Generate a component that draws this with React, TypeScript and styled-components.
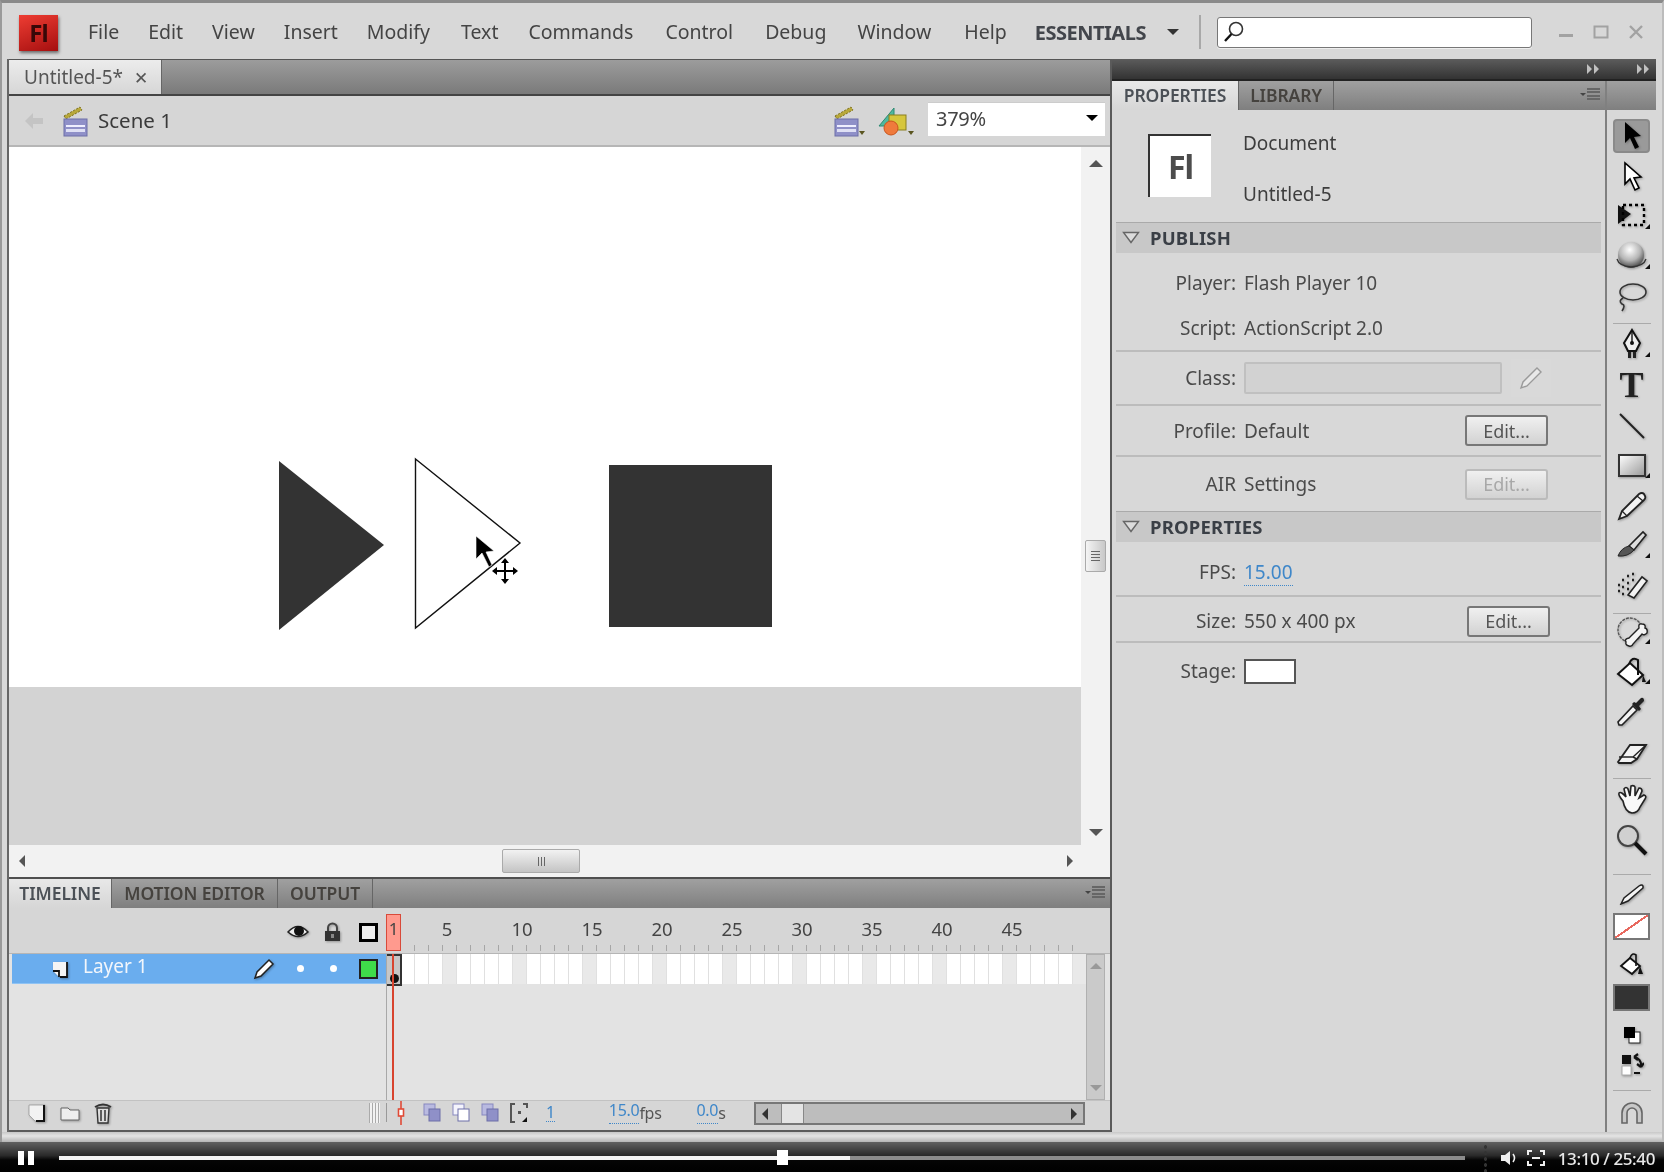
import React from "react";
import styled, { createGlobalStyle } from "styled-components";

const Global = createGlobalStyle`
  html, body { margin: 0; padding: 0; width: 1664px; height: 1172px; overflow: hidden; background: #d8d8d8; }
  #root { width: 1664px; height: 1172px; }
  * { box-sizing: border-box; }
`;

const Page = styled.div`
  width: 1664px; height: 1172px; display: flex; flex-direction: column; overflow: hidden;
  font-family: "Noto Sans", "Liberation Sans", sans-serif; font-size: 19px; color: #3d3d3d;
  background: #d8d8d8; filter: blur(0.55px);
`;
const Window = styled.div`
  height: 1142px; display: flex; flex-direction: column;
  border-top: 3px solid #8a8a8a; border-left: 2px solid #9a9a9a; border-right: 2px solid #bcbcbc;
  background: #d8d8d8;
`;
const MenuBar = styled.header`
  height: 56px; display: flex; align-items: center; padding: 2px 0 0 17px; flex: none;
`;
const Logo = styled.div`
  width: 39px; height: 36px; margin-right: 30px; margin-top: 1px; display: flex; align-items: center; justify-content: center;
  background: linear-gradient(160deg, #ee3d33, #a50f0f); box-shadow: 1px 2px 3px rgba(0,0,0,.5);
  font-weight: 700; font-size: 24px; color: #380808; letter-spacing: -1px;
`;
const Menu = styled.nav` display: flex; gap: 29px; `;
const MenuItem = styled.span<{ $extra: number }>` line-height: 24px; color: #444; font-size: 19.5px; margin-left: ${p => p.$extra}px; `;
const Workspaces = styled.div`
  display: flex; align-items: center; margin-left: 28px; font-weight: 700; font-size: 20px; color: #43464c; width: 164px; letter-spacing: -.5px;
`;
const Divider = styled.span` width: 2px; height: 34px; background: #a8a8a8; margin: 0 16px 0 0; `;
const Search = styled.div`
  width: 315px; height: 31px; background: #fff; border: 1px solid #777; border-radius: 3px;
  box-shadow: 0 1px 0 #eee; display: flex; align-items: center; padding-left: 4px;
`;
const WinControls = styled.div` display: flex; align-items: center; margin-left: 26px; gap: 19px; `;

const Workspace = styled.div`
  height: 1073px; flex: none; display: flex; margin: 0 5px 0 5px; 
`;
const Main = styled.main`
  width: 1103px; display: flex; flex-direction: column; border-left: 2px solid #666; 
`;
const DocTabs = styled.div`
  height: 37px; flex: none; display: flex; background: linear-gradient(#9c9c9c, #7a7a7a); border-bottom: 2px solid #444; border-top: 1px solid #555;
`;
const DocTab = styled.div`
  width: 153px; background: linear-gradient(#ececec, #d6d6d6); display: flex; align-items: center; gap: 11px; padding-left: 15px; color: #555; border-right: 1px solid #666;
`;
const CloseX = styled.span` font-size: 17px; `;
const SceneBar = styled.div`
  height: 51px; flex: none; display: flex; align-items: center; background: #d6d6d6; border-bottom: 2px solid #b6b6b6; padding-left: 14px;
`;
const BackGap = styled.span` width: 14px; `;
const SceneName = styled.span` margin-left: 3px; margin-top: -2px; color: #3a3a3a; font-size: 20.5px; `;
const SceneTools = styled.div` margin-left: auto; display: flex; align-items: center; gap: 11px; margin-right: 5px; `;
const ZoomSelect = styled.div`
  width: 177px; height: 34px; background: #fff; display: flex; align-items: center; justify-content: space-between; padding: 0 7px 3px 8px; margin-left: 2px; margin-top: -3px; border-top: 1px solid #ccc; color: #444; font-size: 20px; letter-spacing: -.3px;
`;
const StageArea = styled.div` height: 730px; flex: none; display: flex; flex-direction: column; `;
const StageRow = styled.div` height: 698px; flex: none; display: flex; `;
const Canvas = styled.div` flex: 1; display: flex; flex-direction: column; background: #d3d3d3; `;
const StageSheet = styled.div` height: 540px; flex: none; background: #fff; `;
const Art = styled.svg` display: block; width: 100%; height: 100%; `;
const VBar = styled.div`
  width: 29px; flex: none; background: #f2f2f2; display: flex; flex-direction: column; align-items: center; padding: 13px 0 9px 0;
`;
const VThumb = styled.div`
  width: 21px; height: 32px; margin-top: 373px; margin-bottom: auto; background: linear-gradient(90deg, #f4f4f4, #c8c8c8); border: 1px solid #aaa; border-radius: 2px; display: flex; flex-direction: column; align-items: center; justify-content: center; gap: 2px;
  & > i { width: 9px; height: 1px; background: #666; display: block; }
`;
const HBar = styled.div`
  height: 32px; flex: none; background: #f2f2f2; display: flex; align-items: center; padding: 0 37px 0 10px;
`;
const HThumb = styled.div`
  width: 78px; height: 24px; margin-left: 477px; margin-right: auto; background: linear-gradient(#f2f2f2, #c4c4c4); border: 1px solid #aaa; border-radius: 2px; display: flex; align-items: center; justify-content: center; gap: 2px;
  & > i { width: 1px; height: 9px; background: #666; display: block; }
`;
const Tri = styled.i<{ $d: "u" | "d" | "l" | "r"; $s?: number; $c?: string; $ml?: number }>`
  display: inline-block; width: 0; height: 0; flex: none; margin-left: ${p => p.$ml ?? 0}px;
  ${p => { const s = p.$s ?? 5; const c = p.$c ?? "#555";
    return p.$d === "u" ? `border-left:${s}px solid transparent;border-right:${s}px solid transparent;border-bottom:${s}px solid ${c};`
      : p.$d === "d" ? `border-left:${s}px solid transparent;border-right:${s}px solid transparent;border-top:${s}px solid ${c};`
      : p.$d === "l" ? `border-top:${s}px solid transparent;border-bottom:${s}px solid transparent;border-right:${s}px solid ${c};`
      : `border-top:${s}px solid transparent;border-bottom:${s}px solid transparent;border-left:${s}px solid ${c};`; }}
`;

const Timeline = styled.section`
  height: 255px; flex: none; display: flex; flex-direction: column; background: #d6d6d6; border-top: 2px solid #4f4f4f; border-bottom: 2px solid #5c5c5c;
`;
const TabStrip = styled.div`
  height: 29px; flex: none; display: flex; align-items: stretch; background: linear-gradient(#a0a0a0, #7f7f7f); position: relative;
`;
const PanelTab = styled.div<{ $w: number; $active?: boolean }>`
  width: ${p => p.$w}px; display: flex; align-items: center; justify-content: center; font-size: 17.5px; font-weight: 600; letter-spacing: -.1px; padding-bottom: 2px;
  border-right: 1px solid #666;
  color: ${p => (p.$active ? "#4b5056" : "#45423e")};
  background: ${p => (p.$active ? "linear-gradient(#e8e8e8, #d6d6d6)" : "transparent")};
`;
const PanelMenu = styled.span`
  position: absolute; right: 5px; top: 7px; display: flex; align-items: center; gap: 1px;
`;
const MenuLines = styled.span`
  display: block; width: 13px; height: 12px;
  background: repeating-linear-gradient(#666 0 2px, transparent 2px 3.3px);
`;
const TimeHead = styled.div` height: 45px; flex: none; display: flex; `;
const LayerHead = styled.div`
  width: 377px; flex: none; display: flex; align-items: center; justify-content: flex-end; gap: 15px; padding: 3px 8px 0 0;
`;
const OutlineBox = styled.span` width: 19px; height: 19px; border: 3px solid #000; background: #eee; display: block; margin-left: 3px; `;
const Ruler = styled.div`
  position: relative; flex: 1; display: flex; padding: 10px 0 0 26px; font-size: 18.5px; color: #444;
  &::after {
    content: ""; position: absolute; left: 14px; right: 30px; bottom: 2px; height: 6px;
    background: repeating-linear-gradient(90deg, #a6a6a6 0 1px, transparent 1px 14px);
  }
`;
const FrameNum = styled.span`
  width: 70px; text-align: center; line-height: 22px;
  &:first-of-type { margin-right: 5px; }
`;
const Playhead = styled.div`
  position: absolute; left: 0; top: 6px; width: 15px; height: 37px; background: #ff9a8e; border: 1px solid #d84a3a; display: flex; justify-content: center; font-size: 17px; line-height: 28px; color: #444; z-index: 2;
`;
const TimeRows = styled.div` height: 147px; flex: none; display: flex; position: relative; background: #e3e3e3; border-top: 1px solid #b5b5b5; `;
const LayerCol = styled.div` width: 377px; flex: none; padding-left: 3px; `;
const LayerRow = styled.div`
  height: 30px; background: #6aadee; display: flex; align-items: center; color: #f2f6fb; padding-left: 40px; border-bottom: 1px solid #8fc3f4;
`;
const LayerName = styled.span` margin-left: 13px; margin-top: -5px; font-size: 19px; `;
const LayerTools = styled.div` margin-left: auto; display: flex; align-items: center; gap: 0; padding-right: 8px; `;
const LayerDot = styled.i<{ $w?: number }>`
  width: 7px; height: 7px; background: #fff; border-radius: 50%; display: block; margin-left: ${p => p.$w ?? 0}px;
`;
const Swatch = styled.span` width: 19px; height: 20px; display: block; background: #3fdc4a; border: 2px solid #222; margin-left: 22px; `;
const FrameCol = styled.div` flex: 1; overflow: hidden; border-left: 1px solid #a8a8a8; position: relative; `;
const FrameRow = styled.div` height: 30px; display: flex; margin-left: 14px; `;
const Cell = styled.i<{ $alt?: boolean }>`
  width: 14px; flex: none; display: block; background: ${p => (p.$alt ? "#e9e9e9" : "#fff")}; border-right: 1px solid #e0e0e0;
`;
const KeyFrame = styled.div`
  position: absolute; left: 0; top: 0; width: 15px; height: 32px; border: 2px solid #333; border-left: 0; background: #c6c6c6;
  &::after { content: ""; position: absolute; left: 3px; top: 18px; width: 9px; height: 9px; border-radius: 50%; background: #111; }
`;
const Needle = styled.div` position: absolute; left: 383px; top: 0; bottom: 0; width: 2px; background: #d8442f; z-index: 2; `;
const VBarSmall = styled.div`
  width: 19px; margin-right: 5px; flex: none; background: #cacaca; border: 1px solid #b0b0b0; display: flex; flex-direction: column; align-items: center; justify-content: space-between; padding: 8px 0;
`;
const TimeFoot = styled.div` flex: 1; display: flex; align-items: center; background: #d6d6d6; border-top: 1px solid #c2c2c2; padding-bottom: 5px; `;
const LayerFoot = styled.div` width: 377px; flex: none; display: flex; align-items: center; padding: 0 6px 0 19px; gap: 14px; `;
const Grip = styled.span`
  margin-left: auto; width: 11px; height: 20px; background: repeating-linear-gradient(90deg, #aaa 0 1px, #f2f2f2 1px 3px);
`;
const FrameFoot = styled.div`
  flex: 1; display: flex; align-items: center; height: 100%; padding-left: 8px; gap: 11px; position: relative;
  &::before { content: ""; position: absolute; left: 0; top: 2px; bottom: 3px; width: 1px; background: #999; }
`;
const Marker = styled.span` margin-right: 4px; display: flex; `;
const FootValue = styled.span<{ $ml: number }>`
  margin-left: ${p => p.$ml}px; font-size: 16px; color: #555; display: flex; letter-spacing: -.3px;
`;
const Link = styled.span`
  color: #3f87c9; border-bottom: 1px dotted #3f87c9; line-height: 17px; 
`;
const FootScroll = styled.div`
  position: absolute; left: 368px; top: 1px; width: 331px; height: 23px; background: #bdbdbd; border: 2px solid #777; display: flex; align-items: center; justify-content: space-between; padding: 0 6px;
`;
const FootThumb = styled.span` position: absolute; left: 25px; top: 0; bottom: 0; width: 23px; background: #e4e4e4; border-left: 1px solid #888; border-right: 1px solid #888; `;

const Side = styled.aside` width: 546px; flex: none; display: flex; flex-direction: column; border-left: 2px solid #5a5a5a; `;
const DockHeader = styled.div`
  height: 22px; flex: none; background: linear-gradient(#5c5c5c, #333); border-bottom: 2px solid #222; display: flex; align-items: center; justify-content: flex-end; gap: 36px; padding-right: 6px; color: #bbb;
`;
const SideBody = styled.div` flex: 1; display: flex; `;
const PropsCol = styled.div` flex: 1; display: flex; flex-direction: column; `;
const DocInfo = styled.div` height: 112px; flex: none; display: flex; padding: 24px 0 0 36px; `;
const Thumb = styled.div`
  width: 63px; height: 63px; background: #fff; border-top: 2px solid #333; border-left: 2px solid #333; display: flex; align-items: center; justify-content: center; font-weight: 700; font-size: 32px; color: #4c4c4c; letter-spacing: -1px;
`;
const DocText = styled.div` margin-left: 32px; display: flex; flex-direction: column; justify-content: space-between; height: 75px; margin-top: -3px; line-height: 24px; `;
const SectionHead = styled.div`
  height: 31px; flex: none; margin: 0 4px 0 4px; background: #c8c8c8; border-top: 1px solid #aaa; display: flex; align-items: center; gap: 10px; padding: 0 0 2px 6px; font-weight: 700; font-size: 18.5px; letter-spacing: .2px; color: #3a3f46;
`;
const Row = styled.div<{ $h: number; $line?: boolean; $pt?: number }>`
  height: ${p => p.$h}px; flex: none; margin: 0 4px; display: flex; align-items: center; padding-top: ${p => p.$pt ?? 0}px;
  ${p => (p.$line ? "border-bottom: 2px solid #bcbcbc;" : "")}
`;
const Label = styled.span` width: 120px; flex: none; text-align: right; color: #4a4a4a; `;
const Value = styled.span` margin-left: 8px; color: #4a4a4a; `;
const ClassField = styled.span` margin-left: 8px; width: 258px; height: 32px; background: #d2d2d2; border: 2px solid #c0c0c0; border-radius: 2px; `;
const PencilBox = styled.span` margin-left: 9px; width: 40px; height: 38px; display: flex; align-items: center; justify-content: center; background: #d9d9d9; `;
const EditButton = styled.button<{ $off?: boolean; $right?: number }>`
  margin-left: auto; margin-right: ${p => p.$right ?? 53}px; width: 83px; height: 31px; font: inherit; font-size: 18px; padding: 0;
  color: ${p => (p.$off ? "#a8a8a8" : "#555")};
  background: linear-gradient(#f0f0f0, #d2d2d2);
  border: 2px solid ${p => (p.$off ? "#bbb" : "#777")}; border-radius: 3px;
`;
const StageSwatch = styled.span` margin-left: 8px; width: 52px; height: 25px; background: #fff; border: 2px solid #555; `;

const ToolsCol = styled.div` width: 51px; flex: none; display: flex; flex-direction: column; border-left: 2px solid #808080; background: #d8d8d8; `;
const ToolsHead = styled.div` height: 29px; flex: none; background: linear-gradient(#a0a0a0, #7f7f7f); margin-bottom: 10px; `;
const Tool = styled.div<{ $on?: boolean; $corner?: boolean; $h?: number; $mt?: number; $mb?: number }>`
  position: relative; height: ${p => p.$h ?? 38}px; flex: none; margin: ${p => p.$mt ?? 0}px 6px ${p => p.$mb ?? 2}px 6px; display: flex; align-items: center; justify-content: center;
  ${p => (p.$on ? "background: #9a9a9a; border: 2px solid #8a8a8a; border-radius: 4px; margin-top: -1px; height: 34px; margin-bottom: 5px;" : "")}
  ${p => (p.$corner ? `&::after { content: ""; position: absolute; right: 0; bottom: 7px; border-left: 5px solid transparent; border-bottom: 5px solid #111; }` : "")}
`;
const ToolSep = styled.hr<{ $t?: number; $b?: number }>`
  width: 38px; height: 1px; border: 0; background: #aaa; flex: none; margin: ${p => p.$t ?? 5}px auto ${p => p.$b ?? 4}px 6px;
`;
const TypeT = styled.span` font-family: "Liberation Serif", serif; font-weight: 700; font-size: 36px; line-height: 32px; color: #222; text-shadow: 1px 1px 2px rgba(0,0,0,.35); `;
const ColorChip = styled.div<{ $bg: string }>`
  height: 27px; flex: none; margin: 0 6px; border: 2px solid #777; background: ${p => p.$bg};
`;

const BottomEdge = styled.div` flex: 1; background: linear-gradient(#c8c8c8, #e4e4e4 40%, #b4b4b4); `;
const VideoBar = styled.footer`
  height: 30px; flex: none; position: relative; display: flex; align-items: center; padding: 2px 9px 0 18px;
  background: linear-gradient(#606060, #2a2a2a 45%, #050505 60%, #000); color: #e8e8e8;
`;
const Pause = styled.span` width: 16px; height: 14px; display: block; margin-right: 25px;
  background: linear-gradient(90deg, #fff 0 6px, transparent 6px 10px, #fff 10px 16px); `;
const Track = styled.div` width: 1406px; height: 4px; flex: none; position: relative; background: linear-gradient(90deg, #f4f4f4 0 791px, #8c8c8c 791px); `;
const Knob = styled.span` position: absolute; left: 718px; top: -6px; width: 11px; height: 15px; background: #fff; `;
const Time = styled.span` margin-left: auto; font-size: 17px; font-weight: 500; letter-spacing: -.4px; `;
const Dots = styled.span` width: 5px; height: 28px; margin: 0 13px 0 18px; background: radial-gradient(circle, #333 0 1.5px, transparent 2px) 0 0/5px 6px; `;
const VideoIcons = styled.span` display: flex; align-items: center; gap: 8px; `;

const ShadowSvg = styled.svg` display: block; filter: drop-shadow(1px 1px 1px rgba(0,0,0,.3)); flex: none; `;
const FlatSvg = styled.svg` display: block; flex: none; `;

const TI = ({ children }: { children: React.ReactNode }) => (
  <ShadowSvg width="34" height="34" viewBox="0 0 34 34">{children}</ShadowSvg>
);

const Collapse = () => (
  <FlatSvg width="18" height="13" viewBox="0 0 18 13"><path d="M1.5 1.5 H16.5 L9 11.5 Z" fill="#dcdcdc" stroke="#666" strokeWidth="1.4" /></FlatSvg>
);

const Clapper = ({ small }: { small?: boolean }) => (
  <FlatSvg width="36" height="32" viewBox="0 0 36 32">
    <path d="M5 11 L21 2 L23 5 L7 14 Z" fill="#b8a83a" stroke="#7c7020" strokeWidth="1" strokeDasharray="2 1.5" />
    <rect x="5" y="14" width="23" height="17" fill="#8f90c8" stroke="#6d6ea8" />
    <rect x="7" y="20" width="19" height="2" fill="#eef" />
    <rect x="7" y="24" width="19" height="3" fill="#dfe0f4" />
    {small && <path d="M29 26 h6 l-3 4 Z" fill="#5a5520" />}
  </FlatSvg>
);

const frames = Array.from({ length: 50 }, (_, i) => i + 1);
const labels = [5, 10, 15, 20, 25, 30, 35, 40, 45];
const menu: [string, number][] = [
  ["File", 0], ["Edit", 0], ["View", 0], ["Insert", 0], ["Modify", 0], ["Text", 2],
  ["Commands", 1], ["Control", 3], ["Debug", 3], ["Window", 2], ["Help", 4],
];

const Onion = ({ variant }: { variant: number }) => (
  <FlatSvg width="18" height="20" viewBox="0 0 18 20">
    <rect x="1" y="1" width="11" height="11" fill={variant === 1 ? "#f4f4fc" : "#b9bae0"} stroke="#8788c0" />
    <rect x="6" y="6" width="11" height="12" fill={variant === 1 ? "#fff" : "#8f90c8"} stroke="#6d6ea8" />
  </FlatSvg>
);

export default function App() {
  return (
    <Page>
      <Global />
      <Window>
        <MenuBar>
          <Logo>Fl</Logo>
          <Menu>{menu.map(([m, x]) => <MenuItem key={m} $extra={x}>{m}</MenuItem>)}</Menu>
          <Workspaces>ESSENTIALS<Tri $d="d" $s={6} $c="#333" $ml={21} /></Workspaces>
          <Divider />
          <Search>
            <FlatSvg width="24" height="24" viewBox="0 0 24 24"><circle cx="14" cy="9" r="6.5" fill="none" stroke="#333" strokeWidth="1.6" /><path d="M9.5 14 L3 21" stroke="#111" strokeWidth="2.4" /></FlatSvg>
          </Search>
          <WinControls>
            <FlatSvg width="16" height="16" viewBox="0 0 16 16"><rect x="1" y="10" width="14" height="3" fill="#a2a2a2" /></FlatSvg>
            <FlatSvg width="16" height="16" viewBox="0 0 16 16"><rect x="1.5" y="2.5" width="13" height="11" fill="none" stroke="#a2a2a2" strokeWidth="2" /></FlatSvg>
            <FlatSvg width="16" height="16" viewBox="0 0 16 16"><path d="M2 2 L14 14 M14 2 L2 14" stroke="#a2a2a2" strokeWidth="2.4" /></FlatSvg>
          </WinControls>
        </MenuBar>
        <Workspace>
          <Main>
            <DocTabs><DocTab>Untitled-5*<CloseX>✕</CloseX></DocTab></DocTabs>
            <SceneBar>
              <FlatSvg width="22" height="22" viewBox="0 0 22 22"><path d="M2 11 L10 3 V8 H20 V14 H10 V19 Z" fill="#c4c4c4" /></FlatSvg>
              <BackGap />
              <Clapper />
              <SceneName>Scene 1</SceneName>
              <SceneTools>
                <Clapper small />
                <FlatSvg width="38" height="32" viewBox="0 0 38 32">
                  <path d="M2 21 L17 3 V21 Z" fill="#4fb89e" stroke="#2d8a72" />
                  <rect x="12" y="10" width="17" height="15" fill="#d6c63c" stroke="#8a7f1e" />
                  <circle cx="14" cy="23" r="7" fill="#ef7a3c" stroke="#c9551e" />
                  <path d="M31 26 h6 l-3 4 Z" fill="#5a5520" />
                </FlatSvg>
                <ZoomSelect>379%<Tri $d="d" $s={6} $c="#000" /></ZoomSelect>
              </SceneTools>
            </SceneBar>
            <StageArea>
              <StageRow>
                <Canvas>
                  <StageSheet>
                    <Art viewBox="9 147 1072 540">
                      <path d="M279 461 L384 545 L279 630 Z" fill="#333" />
                      <path d="M415.5 459 L520 543 L415.5 628 Z" fill="#fff" stroke="#111" strokeWidth="1.4" />
                      <rect x="609" y="465" width="163" height="162" fill="#333" />
                      <path d="M476 536 L476 559 L482 553 L489 567 L492 565 L486 552 L494 551 Z" fill="#000" stroke="#fff" strokeWidth=".6" />
                      <path d="M505 560 L505 582 M494 571 L516 571" stroke="#000" strokeWidth="2" />
                      <path d="M505 558 l-4 5 h8 Z M505 584 l-4 -5 h8 Z M492 571 l5 -4 v8 Z M518 571 l-5 -4 v8 Z" fill="#000" />
                    </Art>
                  </StageSheet>
                </Canvas>
                <VBar>
                  <Tri $d="u" $s={7} $c="#555" />
                  <VThumb><i /><i /><i /><i /></VThumb>
                  <Tri $d="d" $s={7} $c="#555" />
                </VBar>
              </StageRow>
              <HBar>
                <Tri $d="l" $s={6} $c="#555" />
                <HThumb><i /><i /><i /></HThumb>
                <Tri $d="r" $s={6} $c="#555" />
              </HBar>
            </StageArea>
            <Timeline>
              <TabStrip>
                <PanelTab $w={103} $active>TIMELINE</PanelTab>
                <PanelTab $w={166}>MOTION EDITOR</PanelTab>
                <PanelTab $w={95}>OUTPUT</PanelTab>
                <PanelMenu><Tri $d="d" $s={3} $c="#444" /><MenuLines /></PanelMenu>
              </TabStrip>
              <TimeHead>
                <LayerHead>
                  <ShadowSvg width="22" height="18" viewBox="0 0 22 18"><path d="M1 9 Q11 -2 21 9 Q11 18 1 9 Z" fill="#eee" stroke="#222" strokeWidth="1.5" /><circle cx="12" cy="8" r="5" fill="#111" /></ShadowSvg>
                  <ShadowSvg width="17" height="20" viewBox="0 0 17 20"><path d="M4 9 V6 a4.5 4.5 0 0 1 9 0 V9" fill="none" stroke="#444" strokeWidth="2" /><rect x="1" y="9" width="15" height="10" fill="#333" /><rect x="7" y="12" width="3" height="4" fill="#888" /></ShadowSvg>
                  <OutlineBox />
                </LayerHead>
                <Ruler>
                  <Playhead>1</Playhead>
                  {labels.map(l => <FrameNum key={l}>{l}</FrameNum>)}
                </Ruler>
              </TimeHead>
              <TimeRows>
                <LayerCol>
                  <LayerRow>
                    <ShadowSvg width="18" height="18" viewBox="0 0 18 18"><path d="M1 2 H15 V17 H7 L1 11 Z" fill="#f4f4f4" /><path d="M15 2 V17 H8 M1 11 H7 V17" stroke="#111" strokeWidth="1.8" fill="none" /></ShadowSvg>
                    <LayerName>Layer 1</LayerName>
                    <LayerTools>
                      <ShadowSvg width="24" height="24" viewBox="0 0 24 24"><path d="M3 21 L5 15 L17 3 L21 7 L9 19 Z" fill="#fff" stroke="#222" strokeWidth="1.5" /></ShadowSvg>
                      <LayerDot $w={21} />
                      <LayerDot $w={26} />
                      <Swatch />
                    </LayerTools>
                  </LayerRow>
                </LayerCol>
                <FrameCol>
                  <FrameRow>{frames.map(f => <Cell key={f} $alt={(f + 1) % 5 === 0} />)}</FrameRow>
                  <KeyFrame />
                </FrameCol>
                <VBarSmall><Tri $d="u" $s={6} $c="#999" /><Tri $d="d" $s={6} $c="#999" /></VBarSmall>
                <Needle />
              </TimeRows>
              <TimeFoot>
                <LayerFoot>
                  <ShadowSvg width="18" height="18" viewBox="0 0 18 18"><path d="M1 1 H17 V17 H7 L1 11 Z" fill="#f2f2f2" stroke="#999" strokeWidth=".8" /><path d="M16 1 V17 H8" stroke="#111" strokeWidth="2" fill="none" /></ShadowSvg>
                  <ShadowSvg width="20" height="16" viewBox="0 0 20 16"><path d="M1 3 H8 L10 5 H19 V15 H1 Z" fill="#eee" stroke="#666" /></ShadowSvg>
                  <ShadowSvg width="18" height="22" viewBox="0 0 18 22"><path d="M3 6 H15 L14 21 H4 Z" fill="#ddd" stroke="#333" strokeWidth="1.4" /><path d="M1 5 Q9 0 17 5" fill="none" stroke="#333" strokeWidth="2" /><path d="M7 8 V19 M11 8 V19" stroke="#333" strokeWidth="1.5" /></ShadowSvg>
                  <Grip />
                </LayerFoot>
                <FrameFoot>
                  <Marker>
                    <FlatSvg width="14" height="24" viewBox="0 0 14 24"><path d="M7 0 V24" stroke="#e04a36" strokeWidth="1.6" /><rect x="4.5" y="8" width="5" height="7" fill="#fff" stroke="#e04a36" strokeWidth="1.6" /></FlatSvg>
                  </Marker>
                  <Onion variant={0} />
                  <Onion variant={1} />
                  <Onion variant={2} />
                  <FlatSvg width="18" height="20" viewBox="0 0 18 20"><path d="M5 1 H1 V19 H5 M13 1 H17 V5 M9 9 h1 v1 h-1 Z" fill="none" stroke="#555" strokeWidth="2" /><path d="M17 14 V19 H12 Z" fill="#111" /></FlatSvg>
                  <FootValue $ml={7}><Link>1</Link></FootValue>
                  <FootValue $ml={43}><Link>15.0</Link>fps</FootValue>
                  <FootValue $ml={24}><Link>0.0</Link>s</FootValue>
                  <FootScroll>
                    <Tri $d="l" $s={6} $c="#333" />
                    <FootThumb />
                    <Tri $d="r" $s={6} $c="#333" />
                  </FootScroll>
                </FrameFoot>
              </TimeFoot>
            </Timeline>
          </Main>
          <Side>
            <DockHeader>
              <FlatSvg width="14" height="10" viewBox="0 0 14 10"><path d="M1 0 L6 5 L1 10 Z M8 0 L13 5 L8 10 Z" fill="#c0c0c0" /></FlatSvg>
              <FlatSvg width="14" height="10" viewBox="0 0 14 10"><path d="M1 0 L6 5 L1 10 Z M8 0 L13 5 L8 10 Z" fill="#c0c0c0" /></FlatSvg>
            </DockHeader>
            <SideBody>
              <PropsCol>
                <TabStrip>
                  <PanelTab $w={127} $active>PROPERTIES</PanelTab>
                  <PanelTab $w={95}>LIBRARY</PanelTab>
                  <PanelMenu><Tri $d="d" $s={3} $c="#444" /><MenuLines /></PanelMenu>
                </TabStrip>
                <DocInfo>
                  <Thumb>Fl</Thumb>
                  <DocText><span>Document</span><span>Untitled-5</span></DocText>
                </DocInfo>
                <SectionHead><Collapse />PUBLISH</SectionHead>
                <Row $h={53} $pt={6}><Label>Player:</Label><Value>Flash Player 10</Value></Row>
                <Row $h={46} $line><Label>Script:</Label><Value>ActionScript 2.0</Value></Row>
                <Row $h={54} $line><Label>Class:</Label><ClassField /><PencilBox>
                  <FlatSvg width="26" height="26" viewBox="0 0 26 26"><path d="M3 23 L5 17 L19 3 L23 7 L9 21 Z" fill="#e8e8e8" stroke="#9a9a9a" strokeWidth="1.4" /></FlatSvg>
                </PencilBox></Row>
                <Row $h={51} $line><Label>Profile:</Label><Value>Default</Value><EditButton>Edit...</EditButton></Row>
                <Row $h={54}><Label>AIR</Label><Value>Settings</Value><EditButton $off>Edit...</EditButton></Row>
                <SectionHead><Collapse />PROPERTIES</SectionHead>
                <Row $h={55} $line $pt={6}><Label>FPS:</Label><Value><Link>15.00</Link></Value></Row>
                <Row $h={46} $line $pt={4}><Label>Size:</Label><Value>550 x 400 px</Value><EditButton $right={51}>Edit...</EditButton></Row>
                <Row $h={54} $pt={2}><Label>Stage:</Label><StageSwatch /></Row>
              </PropsCol>
              <ToolsCol>
                <ToolsHead />
                <Tool $on><TI><path d="M10 3 L10 24 L15 19 L20 30 L24 28 L19 18 L26 17 Z" fill="#000" /></TI></Tool>
                <Tool><TI><path d="M10 3 L10 24 L15 19 L20 30 L24 28 L19 18 L26 17 Z" fill="#fff" stroke="#000" strokeWidth="1.6" /></TI></Tool>
                <Tool $corner><TI><path d="M3 5 L3 24 L16 14 Z" fill="#111" /><rect x="8" y="5" width="21" height="20" fill="none" stroke="#000" strokeWidth="2.4" strokeDasharray="3 3" /></TI></Tool>
                <Tool $corner><TI>
                  <defs><radialGradient id="ball" cx=".45" cy=".3" r=".75"><stop offset="0" stopColor="#fff" /><stop offset=".55" stopColor="#b4b4b4" /><stop offset="1" stopColor="#333" /></radialGradient></defs>
                  <circle cx="16" cy="15" r="13" fill="url(#ball)" /><path d="M2 19 Q4 26 16 27 Q29 26 31 19" fill="none" stroke="#333" strokeWidth="1.3" />
                </TI></Tool>
                <Tool><TI><ellipse cx="18" cy="12" rx="13" ry="8" fill="none" stroke="#333" strokeWidth="1.6" /><path d="M8 18 Q3 21 7 24 Q11 25 7 31" fill="none" stroke="#333" strokeWidth="1.6" /></TI></Tool>
                <ToolSep $b={2} />
                <Tool $corner $mb={2}><TI><path d="M17 2 L25 15 L21 23 H13 L9 15 Z" fill="#eee" stroke="#111" strokeWidth="2" /><path d="M17 3 V14" stroke="#111" strokeWidth="1.4" /><circle cx="17" cy="15" r="2" fill="#111" /><rect x="13" y="24" width="3" height="6" fill="#222" /><rect x="18" y="24" width="3" height="6" fill="#222" /></TI></Tool>
                <Tool $mb={3}><TypeT>T</TypeT></Tool>
                <Tool><TI><path d="M5 5 L29 29" stroke="#222" strokeWidth="2" /></TI></Tool>
                <Tool $corner><TI>
                  <defs><linearGradient id="rc" x1="0" y1="0" x2="1" y2="1"><stop offset="0" stopColor="#fff" /><stop offset="1" stopColor="#999" /></linearGradient></defs>
                  <rect x="4" y="6" width="26" height="21" fill="url(#rc)" stroke="#333" strokeWidth="2" />
                </TI></Tool>
                <Tool><TI><path d="M4 30 L7 22 L24 5 Q27 3 29 5 L30 7 Q31 9 29 11 L12 27 Z" fill="#f2f2f2" stroke="#222" strokeWidth="1.8" /><path d="M7 22 L12 27 M22 7 L28 12" stroke="#222" strokeWidth="1.3" /></TI></Tool>
                <Tool $corner><TI><path d="M14 17 L28 3 L31 6 L19 21 Z" fill="#ddd" stroke="#222" strokeWidth="1.6" /><path d="M14 17 Q6 19 3 27 Q13 28 19 21 Z" fill="#555" stroke="#222" /></TI></Tool>
                <Tool><TI><path d="M13 26 L27 8 L32 12 L19 29 Z" fill="#f2f2f2" stroke="#222" strokeWidth="1.6" /><path d="M3 22 h2 M3 16 h2 M7 11 h2 M7 18 h2 M7 25 h2 M12 7 h2 M12 14 h2 M17 5 h2 M12 20 h2 M17 11 h2" stroke="#222" strokeWidth="2.4" /></TI></Tool>
                <ToolSep $t={6} $b={-1} />
                <Tool $corner><TI><circle cx="15" cy="15" r="12" fill="none" stroke="#555" strokeWidth="1.4" strokeDasharray="3 1" /><path d="M14 23 L24 13 Q23 8 27 9 Q31 9 30 13 Q33 14 32 18 Q29 21 27 19 L18 29 Q17 32 14 31 Q10 30 11 27 Q9 24 14 23 Z" fill="#f4f4f4" stroke="#222" strokeWidth="1.4" /></TI></Tool>
                <Tool $corner $mb={1}><TI><path d="M3 19 L15 8 L28 20 L17 30 Z" fill="#fff" stroke="#111" strokeWidth="2" /><path d="M14 9 Q17 1 23 5 V20" fill="none" stroke="#111" strokeWidth="2" /><path d="M28 20 L31 27 L27 27 Z" fill="#111" /></TI></Tool>
                <Tool $mb={3}><TI><path d="M4 31 L3 28 L18 12 L22 16 L7 31 Z" fill="#f2f2f2" stroke="#222" strokeWidth="1.6" /><path d="M17 10 L24 17 L26 15 L24 12 L29 7 Q29 3 26 4 L21 9 L19 8 Z" fill="#222" /></TI></Tool>
                <Tool><TI><path d="M3 27 L15 10 H31 L22 24 L16 28 H4 Z" fill="#f4f4f4" stroke="#222" strokeWidth="1.8" /><path d="M4 22 H18 L22 24 M18 22 L31 10" stroke="#222" strokeWidth="1.4" fill="none" /></TI></Tool>
                <ToolSep $t={5} $b={2} />
                <Tool><TI><path d="M8 18 Q3 12 4 10 Q6 8 11 14 L9 6 Q11 3 13 6 L15 13 L16 3 Q19 2 20 4 L20 13 L24 5 Q27 5 27 8 L24 15 L29 12 Q32 13 30 16 L25 24 Q23 30 17 30 Q10 29 8 18 Z" fill="#f8f8f8" stroke="#222" strokeWidth="1.6" /></TI></Tool>
                <Tool><TI><circle cx="13" cy="13" r="10" fill="#d0d0d0" stroke="#444" strokeWidth="2" /><path d="M20 20 L31 31" stroke="#111" strokeWidth="4" /></TI></Tool>
                <ToolSep $t={13} $b={8} />
                <Tool $h={22} $mb={8}><ShadowSvg width="30" height="22" viewBox="0 0 30 22"><path d="M4 21 L7 15 L22 3 Q25 1 26 3 L26 5 L11 18 Z" fill="#f4f4f4" stroke="#222" strokeWidth="1.5" /></ShadowSvg></Tool>
                <ColorChip $bg="linear-gradient(to bottom right, #fff calc(50% - 1px), #e8685e calc(50% - 1px), #e8685e calc(50% + 1px), #fff calc(50% + 1px))" />
                <Tool $h={36} $mt={6} $mb={2}><ShadowSvg width="26" height="24" viewBox="0 0 26 24"><path d="M2 14 L11 6 L21 14 L13 22 Z" fill="#fff" stroke="#111" strokeWidth="1.8" /><path d="M11 6 Q13 0 17 3 V14" fill="none" stroke="#111" strokeWidth="1.6" /><path d="M21 14 L24 22 L19 22 Z" fill="#111" /></ShadowSvg></Tool>
                <ColorChip $bg="#333" />
                <Tool $h={24} $mt={12} $mb={6}><ShadowSvg width="20" height="20" viewBox="0 0 20 20"><rect x="7" y="7" width="11" height="11" fill="#fff" stroke="#222" /><rect x="2" y="2" width="11" height="11" fill="#000" /></ShadowSvg></Tool>
                <Tool $h={24}><ShadowSvg width="24" height="24" viewBox="0 0 24 24"><rect x="2" y="2" width="9" height="9" fill="#111" /><rect x="2" y="13" width="9" height="9" fill="#fff" stroke="#aaa" /><path d="M14 4 Q22 6 21 14 M21 14 L17 11 M21 14 L24 10 M14 4 L18 1 M14 4 L18 7 M14 20 H20" fill="none" stroke="#111" strokeWidth="2.2" /></ShadowSvg></Tool>
                <ToolSep $t={11} $b={6} />
                <Tool $h={30}><FlatSvg width="26" height="24" viewBox="0 0 26 24"><path d="M3 23 V13 a10 10 0 0 1 20 0 V23 H18 V13 a5 5 0 0 0 -10 0 V23 Z" fill="#c8c8c8" stroke="#666" strokeWidth="1.6" /></FlatSvg></Tool>
              </ToolsCol>
            </SideBody>
          </Side>
        </Workspace>
        <BottomEdge />
      </Window>
      <VideoBar>
        <Pause />
        <Track><Knob /></Track>
        <Dots />
        <VideoIcons>
          <FlatSvg width="18" height="16" viewBox="0 0 18 16"><path d="M0 5 H4 L9 1 V15 L4 11 H0 Z" fill="#eee" /><path d="M12 4 Q15 8 12 12" fill="none" stroke="#eee" strokeWidth="1.6" /></FlatSvg>
          <FlatSvg width="18" height="16" viewBox="0 0 18 16"><path d="M1 5 V1 H5 M13 1 H17 V5 M17 11 V15 H13 M5 15 H1 V11 M5 8 H13" fill="none" stroke="#eee" strokeWidth="2" /></FlatSvg>
        </VideoIcons>
        <Time>13:10 / 25:40</Time>
      </VideoBar>
    </Page>
  );
}
